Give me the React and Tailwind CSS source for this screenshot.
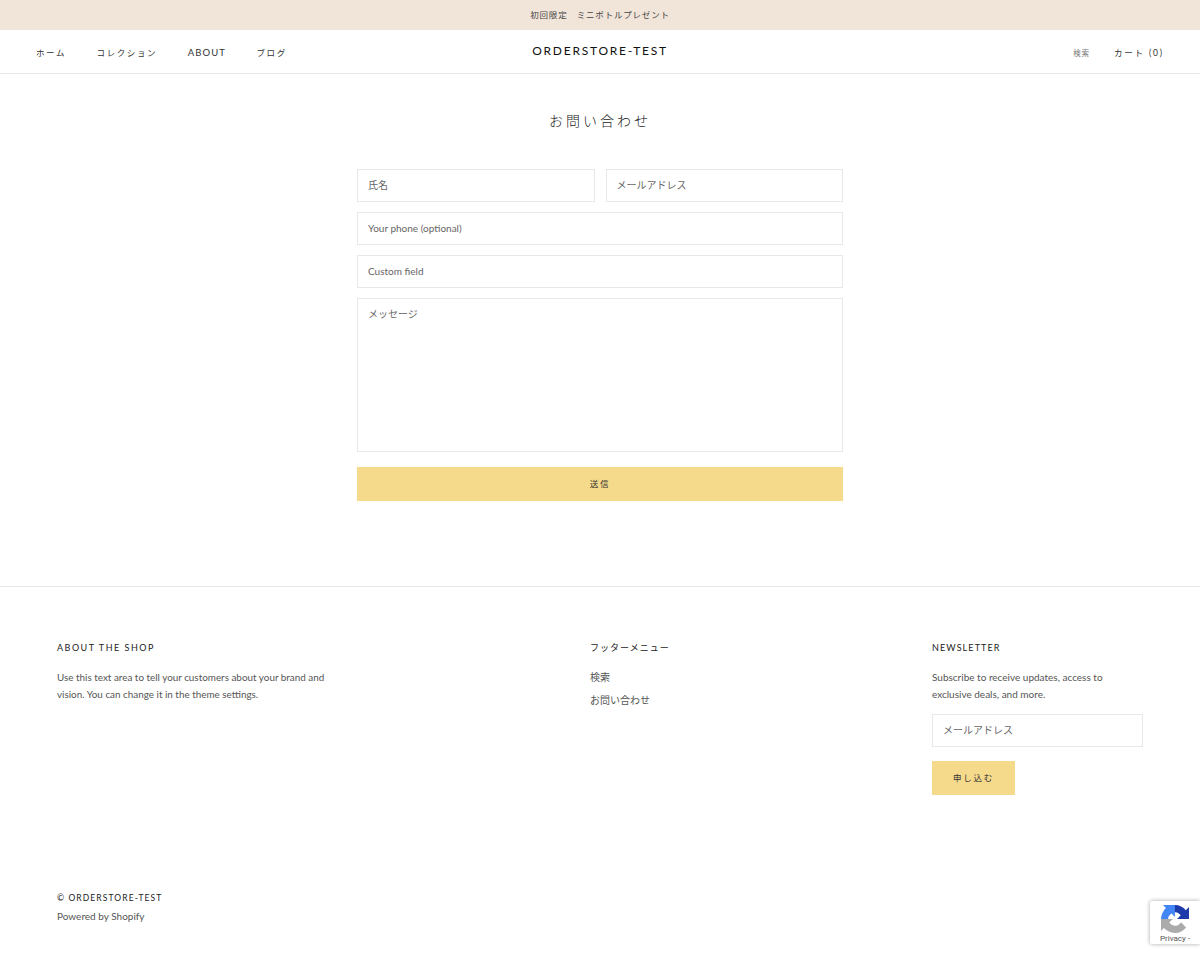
const sans = "font-['Lato','Noto_Sans_CJK_JP',sans-serif]";

function Field({ placeholder, className = "" }) {
  return (
    <input
      placeholder={placeholder}
      className={`h-[33px] w-full border border-[#e8e8e8] bg-white px-[10px] pb-[2px] text-[10px] text-[#555] placeholder:text-[#666] outline-none ${className}`}
    />
  );
}

function FooterTitle({ children, className = "tracking-[1.5px]" }) {
  return <h4 className={`text-[9px] leading-[14px] text-[#222] ${className}`}>{children}</h4>;
}

export default function App() {
  return (
    <div className={`relative h-[954px] overflow-hidden bg-white text-[#555] ${sans}`}>
      <div className="flex h-[30px] items-center justify-center bg-[#f1e5da] text-[8.5px] tracking-[0.8px] text-[#444]">
        初回限定　ミニボトルプレゼント
      </div>

      <header className="grid h-[44px] grid-cols-3 items-center border-b border-[#e6e6e6] px-[36px] pt-[4px]">
        <nav className="flex items-center gap-[30.5px] text-[8.5px] tracking-[1.6px] text-[#333]">
          <a>ホーム</a>
          <a>コレクション</a>
          <a className="text-[9.5px] tracking-[1.1px]">ABOUT</a>
          <a>ブログ</a>
        </nav>
        <div className="mb-[5px] text-center text-[12px] tracking-[1.75px] whitespace-nowrap text-[#111]">ORDERSTORE-TEST</div>
        <div className="flex items-center justify-end gap-[24px]">
          <a className="text-[7.5px] tracking-[0.8px] text-[#777]">検索</a>
          <a className="text-[8.5px] tracking-[1.85px] text-[#333]">カート (0)</a>
        </div>
      </header>

      <main className="mx-auto flex w-[486px] flex-col pt-[36px]">
        <h1 className="text-center text-[14px] leading-[21px] font-light tracking-[3px] text-[#222]">お問い合わせ</h1>
        <form className="mt-[38px] flex flex-col gap-[10px]">
          <div className="flex gap-[11px]">
            <Field placeholder="氏名" />
            <Field placeholder="メールアドレス" />
          </div>
          <Field placeholder="Your phone (optional)" />
          <Field placeholder="Custom field" />
          <textarea
            placeholder="メッセージ"
            className="h-[154px] w-full resize-none border border-[#e8e8e8] px-[10px] py-[6px] text-[10px] leading-[18px] text-[#555] outline-none placeholder:text-[#666]"
          />
          <button type="button" className="mt-[5px] h-[34px] w-full bg-[#f6da8c] text-[8.5px] tracking-[1.7px] text-[#333]">
            送信
          </button>
        </form>
      </main>

      <footer className="mt-[85px] border-t border-[#e6e6e6] px-[57px] pt-[54px]">
        <div className="grid grid-cols-[533px_342px_211px]">
          <div>
            <FooterTitle>ABOUT THE SHOP</FooterTitle>
            <p className="mt-[14px] w-[275px] text-[9.9px] leading-[17px] text-[#555]">
              Use this text area to tell your customers about your brand and vision. You can change it in the theme settings.
            </p>
          </div>
          <div>
            <FooterTitle className="tracking-[1px]">フッターメニュー</FooterTitle>
            <ul className="mt-[14px] flex flex-col gap-[6px] text-[10px] leading-[17px] text-[#555]">
              <li>検索</li>
              <li>お問い合わせ</li>
            </ul>
          </div>
          <div>
            <FooterTitle className="tracking-[1.1px]">NEWSLETTER</FooterTitle>
            <p className="mt-[14px] text-[10px] leading-[17px] text-[#555]">
              Subscribe to receive updates, access to exclusive deals, and more.
            </p>
            <Field placeholder="メールアドレス" className="mt-[11px]" />
            <button type="button" className="mt-[14px] h-[34px] w-[83px] bg-[#f6da8c] text-[8.5px] tracking-[1.7px] text-[#333]">
              申し込む
            </button>
          </div>
        </div>
        <div className="mt-[96px] text-[10px]">
          <div className="text-[8.5px] leading-[14px] tracking-[1.1px] text-[#222]">© ORDERSTORE-TEST</div>
          <div className="mt-[3px] leading-[17px] text-[#555]">Powered by Shopify</div>
        </div>
      </footer>

      <div className="absolute top-[901px] left-[1150px] flex h-[43px] w-[50px] flex-col items-center overflow-hidden rounded-l-[2px] bg-white pt-[4px] shadow-[0_0_4px_rgba(0,0,0,0.35)]">
        <svg viewBox="0 0 64 64" className="h-[28px] w-[28px]">
          <path fill="#1c3aa9" d="M64 31.955l-.033-1.37V4.687l-7.16 7.16C50.948 4.674 42.033.093 32.05.093c-10.4 0-19.622 4.96-25.458 12.64l11.736 11.86a15.55 15.55 0 0 1 4.754-5.334c2.05-1.6 4.952-2.906 8.968-2.906.485 0 .86.057 1.135.163 4.976.393 9.288 3.14 11.828 7.124l-8.307 8.307c10.522-.04 22.4-.066 27.295.006" />
          <path fill="#4285f4" d="M31.9.002l-1.37.033H4.632l7.16 7.16C4.617 13.055.037 21.97.037 31.95c0 10.4 4.96 19.622 12.64 25.458l11.86-11.736a15.55 15.55 0 0 1-5.334-4.754c-1.6-2.05-2.906-4.952-2.906-8.968 0-.485.057-.86.163-1.135.393-4.976 3.14-9.288 7.124-11.828l8.307 8.307C31.85 17.75 31.825 5.87 31.898.97" />
          <path fill="#ababab" d="M.002 31.95l.033 1.37v25.898l7.16-7.16C13.055 59.23 21.97 63.81 31.95 63.81c10.4 0 19.622-4.96 25.458-12.64l-11.736-11.86a15.55 15.55 0 0 1-4.754 5.334c-2.05 1.6-4.952 2.906-8.968 2.906-.485 0-.86-.057-1.135-.163-4.976-.393-9.288-3.14-11.828-7.124l8.307-8.307c-10.522.04-22.4.066-27.295-.006" />
        </svg>
        <span className="font-['Roboto',sans-serif] text-[8px] leading-[11px] text-[#555]">Privacy -</span>
      </div>
    </div>
  );
}
